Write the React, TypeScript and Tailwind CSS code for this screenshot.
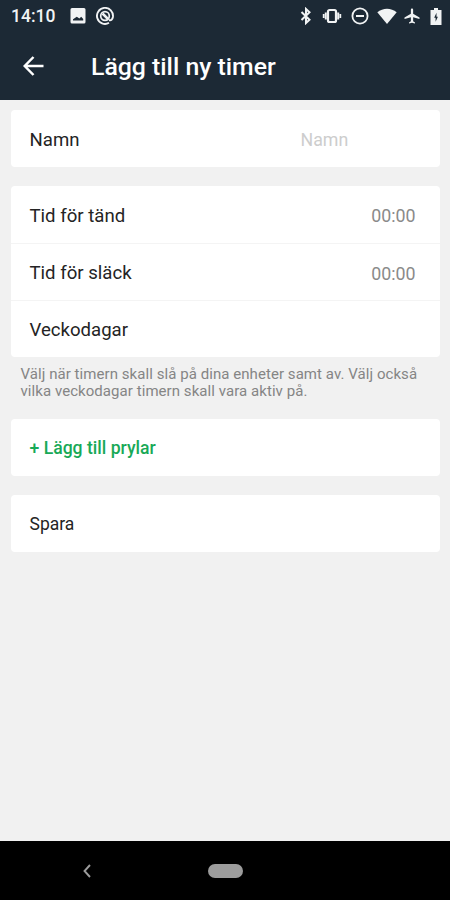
import React from 'react';
import { MdAirplanemodeActive } from 'react-icons/md';

interface CardProps {
  children: React.ReactNode;
}

function Card({ children }: CardProps) {
  return <section className="rounded bg-white">{children}</section>;
}

interface RowProps {
  label: string;
  value?: string;
  divider?: boolean;
}

function Row({ label, value, divider }: RowProps) {
  return (
    <div
      className={`flex h-[57px] items-center justify-between pt-[4px] pr-[24px] pl-[19px] text-[18.6px] ${
        divider ? 'border-t border-[#f4f4f4]' : ''
      }`}
    >
      <span>{label}</span>
      {value && <span className="text-[17.8px] text-[#8a8a8a]">{value}</span>}
    </div>
  );
}

function PictureIcon() {
  return (
    <svg viewBox="0 0 16 16" className="size-4" fill="currentColor">
      <path
        fillRule="evenodd"
        d="M2 0h12q1.5 0 1.5 1.5V14q0 1.500-1.500 1.500H2Q.5 15.500.5 14V1.500Q.5 0 2 0zM3 12.500h10.200V11l-2-2.200-1.800 1.600-2.600-1.700L3 11.300z"
      />
    </svg>
  );
}

function TrackIcon() {
  return (
    <svg viewBox="0 0 18 18" className="ml-[10px] size-[18px]" fill="none" stroke="currentColor">
      <path d="M13 15.8A8 8 0 1 1 16.9 10Q16.2 14 13 13" strokeWidth="1.9" />
      <circle cx="9" cy="9" r="4.3" strokeWidth="1.7" />
      <path d="M6.500 6.500l6 6" strokeWidth="2.5" />
    </svg>
  );
}

function BluetoothIcon() {
  return (
    <svg viewBox="0 0 18 18" className="size-[18px]" fill="none" stroke="currentColor" strokeWidth="2">
      <path d="M4.500 5l8 7.700L9 16V2l3.500 3.300-8 7.700" />
    </svg>
  );
}

function VibrateIcon() {
  return (
    <svg viewBox="0 0 20 16" className="ml-[7px] h-4 w-5" fill="none" stroke="currentColor">
      <rect x="6" y="2" width="8" height="12" rx="1.5" strokeWidth="2.2" />
      <path d="M3.800 4.500v7M16.200 4.500v7" strokeWidth="2" />
      <path d="M1.700 6v4M18.300 6v4" strokeWidth="1.8" />
    </svg>
  );
}

function StatusBar() {
  return (
    <div className="flex h-8 items-center justify-between pr-[8px] pl-[11px] text-[#f1f3f4]">
      <div className="flex items-center">
        <span className="w-[59px] pt-px text-[17.5px] font-medium">14:10</span>
        <PictureIcon />
        <TrackIcon />
      </div>
      <div className="flex items-center">
        <BluetoothIcon />
        <VibrateIcon />
        <svg viewBox="0 0 18 18" className="ml-[9px] size-[18px]" fill="none" stroke="currentColor">
          <circle cx="9" cy="9" r="7.6" strokeWidth="1.8" />
          <path d="M5 9h8" strokeWidth="2" />
        </svg>
        <svg viewBox="0 0 20 16" className="ml-[8px] h-4 w-5" fill="currentColor">
          <path d="M.3 4.300C6-.6 14-.6 19.700 4.300L10 16z" />
        </svg>
        <MdAirplanemodeActive className="ml-[6px] size-[18px]" />
        <svg viewBox="0 0 12 17" className="ml-[9px] h-[17px] w-3" fill="currentColor">
          <path fillRule="evenodd" d="M4 0h4v2h3.500v15H.5V2H4zM6.500 4.800 4.200 9.800h1.400v4L7.900 8.800H6.500z" />
        </svg>
      </div>
    </div>
  );
}

function Header() {
  return (
    <header className="h-[100px] bg-[#1c2935] text-white">
      <StatusBar />
      <div className="flex h-[68px] items-center pl-[23px]">
        <svg viewBox="0 0 21 20" className="h-5 w-[21px]" fill="none" stroke="currentColor" strokeWidth="2.5">
          <path d="M20.500 10H2M10.500 1 1.700 10l8.800 9" />
        </svg>
        <h1 className="ml-[47px] pt-[2px] text-[24.8px] font-medium">Lägg till ny timer</h1>
      </div>
    </header>
  );
}

function NavBar() {
  return (
    <nav className="flex h-[59px] items-center bg-black text-[#9c9c9c]">
      <svg viewBox="0 0 8 14" className="ml-[83px] h-[14px] w-2" fill="none" stroke="currentColor" strokeWidth="1.9">
        <path d="M7 1 1.500 7 7 13" />
      </svg>
      <div className="ml-[117px] h-[14px] w-[35px] rounded-full bg-[#9c9c9c]" />
    </nav>
  );
}

export default function App() {
  return (
    <div className="flex h-[900px] w-[450px] flex-col bg-[#f1f1f1] font-['Roboto',sans-serif] text-[#242424]">
      <Header />
      <main className="flex flex-1 flex-col px-[10.5px] pt-[10px]">
        <Card>
          <div className="flex h-[57px] items-center pt-[3px] pl-[19px]">
            <span className="w-[271px] pt-px text-[18.6px]">Namn</span>
            <span className="text-[17.8px] text-[#cdcdcd]">Namn</span>
          </div>
        </Card>
        <div className="mt-[19px]">
          <Card>
            <Row label="Tid för tänd" value="00:00" />
            <Row label="Tid för släck" value="00:00" divider />
            <Row label="Veckodagar" divider />
          </Card>
        </div>
        <p className="mt-[9px] h-[53px] pl-[10px] text-[15px] leading-[17px] tracking-[0.06px] whitespace-nowrap text-[#858585]">
          Välj när timern skall slå på dina enheter samt av. Välj också
          <br />
          vilka veckodagar timern skall vara aktiv på.
        </p>
        <Card>
          <button className="block h-[57px] w-full pt-[2px] pl-[19px] text-left text-[17.6px] font-medium text-[#18a957]">
            + Lägg till prylar
          </button>
        </Card>
        <div className="mt-[19px]">
          <Card>
            <button className="block h-[57px] w-full pt-[2px] pl-[19px] text-left text-[17.5px]">Spara</button>
          </Card>
        </div>
      </main>
      <NavBar />
    </div>
  );
}
